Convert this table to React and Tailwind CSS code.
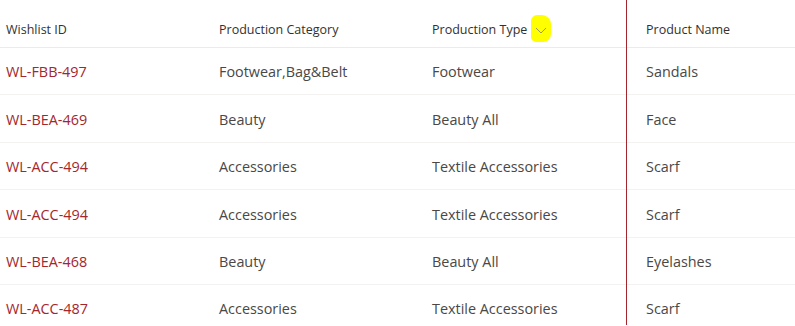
import React from "react";

const rows = [
  { id: "WL-FBB-497", category: "Footwear,Bag&Belt", type: "Footwear", name: "Sandals" },
  { id: "WL-BEA-469", category: "Beauty", type: "Beauty All", name: "Face" },
  { id: "WL-ACC-494", category: "Accessories", type: "Textile Accessories", name: "Scarf" },
  { id: "WL-ACC-494", category: "Accessories", type: "Textile Accessories", name: "Scarf" },
  { id: "WL-BEA-468", category: "Beauty", type: "Beauty All", name: "Eyelashes" },
  { id: "WL-ACC-487", category: "Accessories", type: "Textile Accessories", name: "Scarf" },
];

const cols = "grid grid-cols-[213px_213px_213px_1fr]";

function App() {
  return (
    <div className="relative w-[795px] h-[326px] overflow-hidden bg-white font-['Open_Sans',sans-serif]">
      {/* Header */}
      <div className={`${cols} h-[48px] border-b border-[#edebe9] items-center text-[12.5px] text-[#323130]`}>
        <div className="pl-[6px] pt-[14px]">Wishlist ID</div>
        <div className="pl-[6px] pt-[14px]">Production Category</div>
        <div className="pl-[6px] pt-[14px] flex items-center">
          <span>Production Type</span>
          <span className="relative ml-[4px] -top-[2px] w-[20px] h-[27px] bg-[#ffff00] rounded-[6px_9px_8px_5px] flex items-start justify-center pt-[12px]">
            <svg width="12" height="7" viewBox="0 0 12 7" fill="none">
              <path d="M1 1 L6 6 L11 1" stroke="#9a9a5a" strokeWidth="1" />
            </svg>
          </span>
        </div>
        <div className="pl-[7px] pt-[14px]">Product Name</div>
      </div>

      {/* Rows */}
      {rows.map((r, i) => (
        <div key={i} className={`${cols} h-[47.4px] border-b border-[#f3f2f1] items-center pt-[2px] text-[14.4px] text-[#4a4846]`}>
          <div className="pl-[6px] text-[#a4262c]">{r.id}</div>
          <div className="pl-[6px]">{r.category}</div>
          <div className="pl-[6px]">{r.type}</div>
          <div className="pl-[7px]">{r.name}</div>
        </div>
      ))}

      {/* vertical marker line */}
      <div className="absolute left-[626px] top-0 w-px h-[325px] bg-[#a4262c]" />
    </div>
  );
}

export default App;
